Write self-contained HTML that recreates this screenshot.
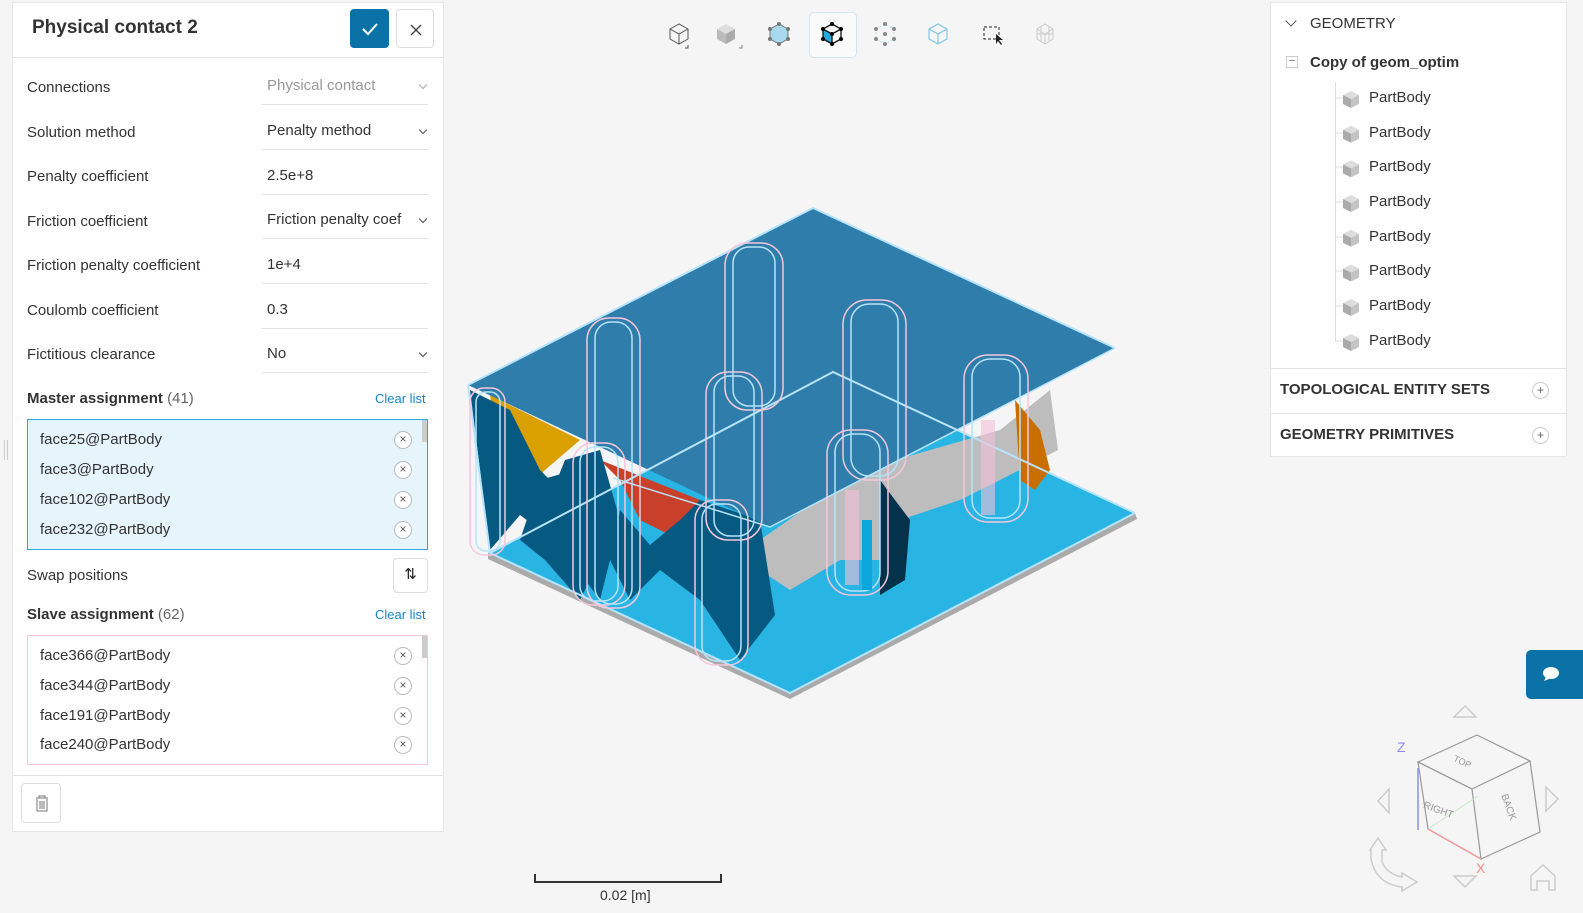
<!DOCTYPE html>
<html><head><meta charset="utf-8"><style>
*{box-sizing:border-box;margin:0;padding:0}
body{width:1583px;height:913px;background:#f5f5f5;font-family:"Liberation Sans",sans-serif;color:#333;position:relative;overflow:hidden}
.a{position:absolute}
.lbl{position:absolute;left:27px;font-size:15px;color:#333}
.val{position:absolute;left:262px;width:166px;font-size:15px;color:#333;padding-left:5px;border-bottom:1px solid #e3e3e3;height:30px;line-height:22px}
.chev{position:absolute;right:2px;top:7px;width:6px;height:6px;border-right:1px solid #555;border-bottom:1px solid #555;transform:rotate(45deg)}
.item{position:absolute;left:12px;font-size:15px;color:#333}
.x{position:absolute;left:366px;width:18px;height:18px;border:1px solid #bbb;border-radius:50%;background:#fff;font-size:12px;line-height:15px;text-align:center;color:#555}
.pb{position:absolute;left:1369px;font-size:15px;color:#333}
</style></head><body>
<div class="a" style="left:12px;top:2px;width:432px;height:830px;background:#fff;border:1px solid #e6e6e6"></div>
<div class="a" style="left:32px;top:17px;font-size:19px;font-weight:bold;color:#333">Physical contact 2</div>
<div class="a" style="left:350px;top:9px;width:39px;height:39px;background:#0b72a8;border-radius:4px"><svg width="39" height="39"><path d="M13 20l5 5 9-10" stroke="#fff" stroke-width="2" fill="none"/></svg></div>
<div class="a" style="left:396px;top:9px;width:38px;height:39px;border:1px solid #ddd;border-radius:4px;background:#fff"><svg width="38" height="39"><path d="M14 15l10 10M24 15l-10 10" stroke="#444" stroke-width="1.4"/></svg></div>
<div class="a" style="left:12px;top:57px;width:432px;height:1px;background:#e3e3e3"></div>

<div class="lbl" style="top:79px">Connections</div><div class="val" style="top:75px;color:#999">Physical contact<span class="chev" style="border-color:#aaa"></span></div>
<div class="lbl" style="top:124px">Solution method</div><div class="val" style="top:120px">Penalty method<span class="chev"></span></div>
<div class="lbl" style="top:168px">Penalty coefficient</div><div class="val" style="top:165px">2.5e+8</div>
<div class="lbl" style="top:213px">Friction coefficient</div><div class="val" style="top:209px;overflow:hidden;white-space:nowrap">Friction penalty coef<span class="chev" style="background:#fff"></span></div>
<div class="lbl" style="top:257px">Friction penalty coefficient</div><div class="val" style="top:254px">1e+4</div>
<div class="lbl" style="top:302px">Coulomb coefficient</div><div class="val" style="top:299px">0.3</div>
<div class="lbl" style="top:346px">Fictitious clearance</div><div class="val" style="top:343px">No<span class="chev"></span></div>

<div class="lbl" style="top:390px"><b>Master assignment</b> <span style="color:#666">(41)</span></div>
<div class="a" style="left:375px;top:391px;font-size:13px;color:#1a84c0">Clear list</div>
<div class="a" style="left:27px;top:419px;width:401px;height:131px;background:#e6f4fb;border:1px solid #2aa6d9">
<div class="a" style="left:394px;top:0;width:5px;height:22px;background:#ccc"></div>
<div class="item" style="top:11px">face25@PartBody</div><div class="x" style="top:11px">×</div>
<div class="item" style="top:41px">face3@PartBody</div><div class="x" style="top:41px">×</div>
<div class="item" style="top:71px">face102@PartBody</div><div class="x" style="top:71px">×</div>
<div class="item" style="top:101px">face232@PartBody</div><div class="x" style="top:101px">×</div>
</div>
<div class="lbl" style="top:567px">Swap positions</div>
<div class="a" style="left:393px;top:558px;width:35px;height:35px;border:1px solid #ddd;border-radius:4px;text-align:center;line-height:32px;font-size:15px;color:#222">⇅</div>
<div class="lbl" style="top:606px"><b>Slave assignment</b> <span style="color:#666">(62)</span></div>
<div class="a" style="left:375px;top:607px;font-size:13px;color:#1a84c0">Clear list</div>
<div class="a" style="left:27px;top:635px;width:401px;height:130px;background:#fff;border:1px solid #f4c6d1">
<div class="a" style="left:394px;top:0;width:5px;height:22px;background:#ccc"></div>
<div class="item" style="top:11px">face366@PartBody</div><div class="x" style="top:11px">×</div>
<div class="item" style="top:41px">face344@PartBody</div><div class="x" style="top:41px">×</div>
<div class="item" style="top:71px">face191@PartBody</div><div class="x" style="top:71px">×</div>
<div class="item" style="top:100px">face240@PartBody</div><div class="x" style="top:100px">×</div>
</div>
<div class="a" style="left:12px;top:775px;width:432px;height:1px;background:#e3e3e3"></div>
<div class="a" style="left:21px;top:783px;width:40px;height:40px;border:1px solid #ddd;border-radius:4px"><svg width="40" height="40"><path d="M14 14h12M17 14v-2h6v2M15 15v12h10V15M18 17v8M20 17v8M22 17v8" stroke="#777" fill="none"/></svg></div>
<div class="a" style="left:4px;top:440px;width:4px;height:20px;border-left:1px solid #ccc;border-right:1px solid #ccc"></div>

<div class="a" style="left:809px;top:12px;width:48px;height:46px;border:1px solid #cfe6f3;border-radius:5px;background:#fafafa"></div>
<svg class="a" style="left:640px;top:10px" width="430" height="50">
<g fill="none" stroke="#555" stroke-width="1"><path d="M30 19l9-5 9 5v10l-9 5-9-5zM30 19l9 5 9-5M39 24v10"/><path d="M45 38h3v-3"/></g>
<g><path d="M77 19l9-5 9 5-9 5z" fill="#ddd"/><path d="M77 19l9 5v10l-9-5z" fill="#bbb"/><path d="M95 19l-9 5v10l9-5z" fill="#aaa"/><path d="M99 38h3v-3" stroke="#888" fill="none"/></g>
<g><path d="M130 19l9-5 9 5v10l-9 5-9-5z" fill="#a8d8ee" stroke="#777"/><circle cx="139" cy="14" r="2" fill="#777"/><circle cx="130" cy="19" r="2" fill="#777"/><circle cx="148" cy="19" r="2" fill="#777"/><circle cx="139" cy="34" r="2" fill="#777"/><circle cx="130" cy="29" r="2" fill="#777"/><circle cx="148" cy="29" r="2" fill="#777"/></g>
<g><path d="M183 19l9 5v10l-9-5z" fill="#29a8dc"/><path d="M183 19l9-5 9 5v10l-9 5-9-5zM183 19l9 5 9-5M192 24v10" fill="none" stroke="#111" stroke-width="1.3"/><circle cx="192" cy="14" r="2"/><circle cx="183" cy="19" r="2"/><circle cx="201" cy="19" r="2"/><circle cx="192" cy="34" r="2"/><circle cx="183" cy="29" r="2"/><circle cx="201" cy="29" r="2"/><circle cx="192" cy="24" r="2"/></g>
<g fill="#888"><path d="M236 19l9-5 9 5v10l-9 5-9-5z" fill="none" stroke="#a8d8ee" stroke-dasharray="2 2"/><circle cx="245" cy="14" r="2"/><circle cx="236" cy="19" r="2"/><circle cx="254" cy="19" r="2"/><circle cx="245" cy="34" r="2"/><circle cx="236" cy="29" r="2"/><circle cx="254" cy="29" r="2"/><circle cx="245" cy="24" r="2"/></g>
<g fill="none" stroke="#8dcbe6" stroke-width="1.3"><path d="M289 19l9-5 9 5v10l-9 5-9-5zM289 19l9 5 9-5M298 24v10"/></g>
<g><rect x="344" y="17" width="15" height="12" fill="none" stroke="#222" stroke-dasharray="3 2"/><path d="M356 24l0 10 2-3 3 4 1-1-3-4 4 0z" fill="#222"/></g>
<g fill="none" stroke="#ccc"><path d="M397 19l8-5 8 5v10l-8 5-8-5zM397 19l8 5 8-5M405 24v10M401 17v14M409 17v14M397 24l16 0"/></g>
</svg>

<svg class="a" style="left:0;top:0" width="1260" height="913">
<polygon points="488,553 790,693 1135,513 1137,519 790,699 488,559" fill="#aaa"/>
<polygon points="488,553 833,372 1135,513 790,693" fill="#29b5e3"/>
<polygon points="640,520 760,540 860,470 1000,430 1050,390 1058,450 1000,480 960,500 900,520 880,560 840,560 790,590 745,560" fill="#bdbdbd"/>
<polygon points="1015,400 1040,430 1050,470 1035,490 1020,480" fill="#c96f00"/>
<polygon points="490,395 580,440 545,470 535,480 520,455 495,430" fill="#d9a000"/>
<polygon points="600,460 700,500 680,540 640,520 620,480" fill="#c9402a"/>
<polygon points="470,390 510,410 540,470 555,485 565,460 600,450 620,520 600,600 570,560 540,530 520,515 490,550" fill="#065a82"/>
<polygon points="540,480 575,470 600,560 580,600 545,560 520,540" fill="#065a82"/>
<polygon points="620,510 650,545 680,520 700,500 760,520 775,615 740,660 700,600 660,570 630,600 610,560" fill="#065a82"/>
<polygon points="880,480 910,520 905,580 880,595" fill="#03324a"/>
<polygon points="468,385 813,208 1115,348 770,527" fill="#2e7dab"/>
<g fill="none" stroke="#b7e3fb" stroke-width="2"><path d="M468,385 813,208 1115,348"/><path d="M468,385 490,553 790,693 1135,513"/><path d="M490,553 833,372 1135,513"/><path d="M613,478 770,527 1115,348" stroke-width="1.5"/></g>
<g fill="none" stroke-width="1.5">
<g stroke="#f6c7dc"><rect x="587" y="318" width="53" height="290" rx="22"/><rect x="725" y="243" width="58" height="167" rx="22"/><rect x="706" y="372" width="56" height="168" rx="22"/><rect x="843" y="300" width="63" height="180" rx="24"/><rect x="964" y="355" width="64" height="167" rx="24"/><rect x="827" y="430" width="61" height="165" rx="24"/><rect x="573" y="443" width="52" height="162" rx="20"/><rect x="695" y="500" width="53" height="165" rx="20"/><rect x="470" y="388" width="35" height="167" rx="14"/></g>
<g stroke="#b7e3fb"><rect x="595" y="322" width="37" height="282" rx="16"/><rect x="733" y="247" width="42" height="159" rx="16"/><rect x="714" y="376" width="40" height="160" rx="16"/><rect x="851" y="304" width="47" height="172" rx="18"/><rect x="972" y="359" width="48" height="159" rx="18"/><rect x="835" y="434" width="45" height="157" rx="18"/><rect x="580" y="447" width="38" height="154" rx="15"/><rect x="702" y="504" width="39" height="157" rx="15"/><rect x="476" y="392" width="24" height="159" rx="10"/></g>
</g>
<rect x="981" y="420" width="14" height="95" fill="#f2bfd8" opacity=".6"/><rect x="845" y="490" width="14" height="95" fill="#f2bfd8" opacity=".6"/>
<rect x="862" y="520" width="10" height="70" fill="#0ba7dc"/>
<path d="M1264 222v18M1267 222v18" stroke="#ccc"/>
</svg>

<div class="a" style="left:534px;top:874px;width:188px;height:9px;border:2px solid #333;border-top:none"></div>
<div class="a" style="left:600px;top:887px;font-size:14px;color:#333">0.02 [m]</div>

<div class="a" style="left:1270px;top:2px;width:297px;height:455px;background:#fff;border:1px solid #e6e6e6"></div>
<div class="a" style="left:1287px;top:17px;width:8px;height:8px;border-right:1px solid #555;border-bottom:1px solid #555;transform:rotate(45deg)"></div>
<div class="a" style="left:1310px;top:15px;font-size:15px;color:#333">GEOMETRY</div>
<div class="a" style="left:1286px;top:56px;width:12px;height:12px;border:1px solid #ccc;font-size:11px;line-height:9px;text-align:center;color:#666">−</div>
<div class="a" style="left:1310px;top:54px;font-size:15px;font-weight:bold;color:#333">Copy of geom_optim</div>
<div class="a" style="left:1335px;top:82px;width:1px;height:260px;background:#ddd"></div>
<div class="a" style="left:1270px;top:368px;width:297px;height:1px;background:#e3e3e3"></div>
<div class="a" style="left:1280px;top:381px;font-size:15px;font-weight:bold;color:#333">TOPOLOGICAL ENTITY SETS</div>
<div class="a" style="left:1532px;top:382px;width:17px;height:17px;border:1px solid #ccc;border-radius:50%;font-size:12px;line-height:15px;text-align:center;color:#666">+</div>
<div class="a" style="left:1270px;top:413px;width:297px;height:1px;background:#e3e3e3"></div>
<div class="a" style="left:1280px;top:426px;font-size:15px;font-weight:bold;color:#333">GEOMETRY PRIMITIVES</div>
<div class="a" style="left:1532px;top:427px;width:17px;height:17px;border:1px solid #ccc;border-radius:50%;font-size:12px;line-height:15px;text-align:center;color:#666">+</div>

<svg class="a" style="left:1330px;top:0" width="60" height="360">
<g id="c"><path d="M13 95l8-4 8 4-8 4z" fill="#ddd"/><path d="M13 95l8 4v9l-8-4z" fill="#aaa"/><path d="M29 95l-8 4v9l8-4z" fill="#c4c4c4"/></g>
<use href="#c" y="34.7"/><use href="#c" y="69.4"/><use href="#c" y="104"/><use href="#c" y="138.8"/><use href="#c" y="173.5"/><use href="#c" y="208"/><use href="#c" y="243"/>
<g stroke="#ddd"><path d="M5 98h8M5 133h8M5 167h8M5 202h8M5 237h8M5 271h8M5 306h8M5 341h8"/></g>
</svg>
<div class="pb" style="top:89px">PartBody</div><div class="pb" style="top:124px">PartBody</div><div class="pb" style="top:158px">PartBody</div><div class="pb" style="top:193px">PartBody</div><div class="pb" style="top:228px">PartBody</div><div class="pb" style="top:262px">PartBody</div><div class="pb" style="top:297px">PartBody</div><div class="pb" style="top:332px">PartBody</div>

<div class="a" style="left:1526px;top:650px;width:57px;height:49px;background:#0b72a8;border-radius:5px 0 0 5px"><svg width="57" height="49"><ellipse cx="25" cy="23" rx="8" ry="6" fill="#fff"/><path d="M20 27l-2 4 5-2z" fill="#fff"/></svg></div>

<svg class="a" style="left:1360px;top:700px" width="223" height="213">
<g fill="none" stroke="#ccc" stroke-width="1.5"><path d="M94 17l11-11 11 11z"/><path d="M94 176l11 11 11-11z"/><path d="M29 89l-11 12 11 12z"/><path d="M186 87l12 12-12 12z"/><path d="M171 190v-14l12-11 12 11v14h-6v-9h-12v9z"/><path d="M10 150l8-12 8 12h-4v12q5 12 20 15v-4l15 9-15 9v-4q-26-3-31-28v-9z"/></g>
<g fill="none" stroke="#999" stroke-width="1.2"><path d="M58 62l59-27 53 26-58 28z"/><path d="M58 62l54 27 9 70-53-30z"/><path d="M170 61l10 71-59 27"/></g>
<path d="M68 129l50-33" stroke="#c9eac9"/>
<path d="M58 130V68" stroke="#8c8cf5" stroke-width="1.5"/><path d="M68 129l53 30" stroke="#f59a9a" stroke-width="1.5"/>
<text x="37" y="52" fill="#8c8cf5" font-size="14" font-family="Liberation Sans">Z</text>
<text x="116" y="173" fill="#f58a8a" font-size="14" font-family="Liberation Sans">X</text>
<text x="92" y="64" fill="#999" font-size="9" font-family="Liberation Sans" transform="rotate(25 100 64)">TOP</text>
<text x="62" y="112" fill="#999" font-size="10" font-family="Liberation Sans" transform="rotate(20 75 112)">RIGHT</text>
<text x="128" y="96" fill="#999" font-size="10" font-family="Liberation Sans" transform="rotate(70 135 105)">BACK</text>
</svg>
</body></html>
